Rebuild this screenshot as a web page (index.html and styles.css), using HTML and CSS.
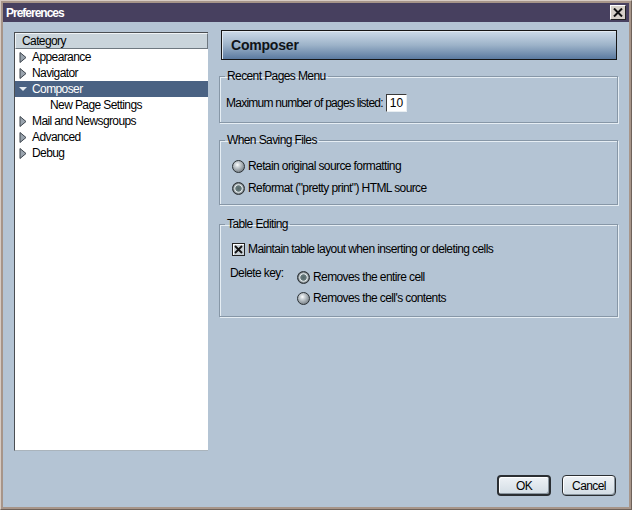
FILE: index.html
```html
<!DOCTYPE html>
<html>
<head>
<meta charset="utf-8">
<link rel="stylesheet" href="styles.css">
</head>
<body>
<div class="window">
  <div class="frame">
    <div class="titlebar">
      <span class="title">Preferences</span>
      <span class="close"><svg width="10" height="9" viewBox="0 0 10 9"><path d="M1 0.5 L9 8.5 M9 0.5 L1 8.5" stroke="#111" stroke-width="2"/></svg></span>
    </div>
    <div class="body">
      <div class="main">
        <div class="tree">
          <div class="tree-head">Category</div>
          <div class="row"><svg class="twisty" width="8" height="11" viewBox="0 0 8 11"><path d="M1 0.5 L7 5.5 L1 10.5 Z" fill="#9aa4ae" stroke="#3c444c"/></svg>Appearance</div>
          <div class="row"><svg class="twisty" width="8" height="11" viewBox="0 0 8 11"><path d="M1 0.5 L7 5.5 L1 10.5 Z" fill="#9aa4ae" stroke="#3c444c"/></svg>Navigator</div>
          <div class="row selected"><svg class="twisty" width="8" height="11" viewBox="0 0 8 11"><path d="M0 3 L8 3 L4 7 Z" fill="#e6ecf2"/></svg>Composer</div>
          <div class="row child">New Page Settings</div>
          <div class="row"><svg class="twisty" width="8" height="11" viewBox="0 0 8 11"><path d="M1 0.5 L7 5.5 L1 10.5 Z" fill="#9aa4ae" stroke="#3c444c"/></svg>Mail and Newsgroups</div>
          <div class="row"><svg class="twisty" width="8" height="11" viewBox="0 0 8 11"><path d="M1 0.5 L7 5.5 L1 10.5 Z" fill="#9aa4ae" stroke="#3c444c"/></svg>Advanced</div>
          <div class="row"><svg class="twisty" width="8" height="11" viewBox="0 0 8 11"><path d="M1 0.5 L7 5.5 L1 10.5 Z" fill="#9aa4ae" stroke="#3c444c"/></svg>Debug</div>
        </div>
        <div class="pane">
          <div class="pane-head">Composer</div>
          <fieldset class="group g1">
            <legend>Recent Pages Menu</legend>
            <div class="line">
              <span class="line-label">Maximum number of pages listed:</span>
              <span class="input">10</span>
            </div>
          </fieldset>
          <fieldset class="group g2">
            <legend>When Saving Files</legend>
            <div class="opt"><span class="radio"></span>Retain original source formatting</div>
            <div class="opt"><span class="radio on"></span>Reformat ("pretty print") HTML source</div>
          </fieldset>
          <fieldset class="group g3">
            <legend>Table Editing</legend>
            <div class="opt"><span class="check"><svg width="9" height="9" viewBox="0 0 9 9"><path d="M1 1 L8 8 M8 1 L1 8" stroke="#111" stroke-width="1.8"/></svg></span>Maintain table layout when inserting or deleting cells</div>
            <div class="delete">
              <span class="del-label">Delete key:</span>
              <div class="del-opts">
                <div class="opt"><span class="radio on"></span>Removes the entire cell</div>
                <div class="opt"><span class="radio"></span>Removes the cell's contents</div>
              </div>
            </div>
          </fieldset>
        </div>
      </div>
      <div class="buttons">
        <span class="btn default">OK</span>
        <span class="btn">Cancel</span>
      </div>
    </div>
  </div>
</div>
</body>
</html>
```
FILE: styles.css
```css
* { box-sizing: border-box; }
html, body { margin: 0; padding: 0; background: #b4c4d4; }
body {
  font-family: "Liberation Sans", Arial, sans-serif;
  font-size: 12px;
  letter-spacing: -0.6px;
  color: #000;
}
.window {
  width: 632px;
  height: 510px;
  border: 1px solid #d6cbc3;
  border-right-color: #6e625a;
  border-bottom-color: #6e625a;
}
.frame {
  width: 100%;
  height: 100%;
  border: 2px solid #a79589;
  display: flex;
  flex-direction: column;
}
.titlebar {
  height: 19px;
  background: #47405f;
  display: flex;
  align-items: center;
  justify-content: space-between;
  padding: 0 3px 0 3px;
}
.title {
  color: #fff;
  font-weight: bold;
  font-size: 12px;
  letter-spacing: -1px;
}
.close {
  width: 16px;
  height: 15px;
  background: #d6d0c8;
  border: 1px solid #fff;
  border-right-color: #222;
  border-bottom-color: #222;
  display: flex;
  align-items: center;
  justify-content: center;
}
.body {
  flex: 1;
  background: #b4c4d4;
  display: flex;
  flex-direction: column;
  padding: 8px 11px 11px 11px;
}
.main {
  display: flex;
  gap: 11px;
  align-items: flex-start;
}
.tree {
  width: 194px;
  height: 419px;
  margin-top: 2px;
  background: #fff;
  border-left: 1px solid #4a4e52;
  border-top: 1px solid #4a4e52;
  border-bottom: 1px solid #aab4bc;
}
.tree-head {
  height: 16px;
  line-height: 15px;
  background: #c9d4db;
  border: 1px solid #f0f4f6;
  border-right-color: #6e7880;
  border-bottom-color: #6e7880;
  padding-left: 6px;
}
.row {
  height: 16px;
  line-height: 16px;
  display: flex;
  align-items: center;
  padding-left: 4px;
  white-space: nowrap;
}
.twisty { margin-right: 5px; flex: none; }
.row.selected { background: #4a6283; color: #fff; }
.row.child { padding-left: 35px; }
.pane {
  flex: 1;
  display: flex;
  flex-direction: column;
}
.pane-head {
  height: 30px;
  margin: 0 1px 0 2px;
  border: 1px solid #151515;
  box-shadow: inset 1px 1px 0 #e2eaf2;
  background: linear-gradient(#cddbe9, #9db3c9 50%, #5b7aa0);
  font-weight: bold;
  font-size: 14px;
  letter-spacing: -0.2px;
  line-height: 28px;
  padding-left: 9px;
  color: #101418;
}
.group {
  margin: 9px 0 0 0;
  border: 1px solid #8797a7;
  box-shadow: inset 1px 1px 0 #e6eef4, 1px 1px 0 #e6eef4;
  padding: 0 5px;
  min-width: 0;
}
.group + .group { margin-top: 10px; }
.group.g3 { margin-top: 12px; }
.group legend {
  padding: 0 2px;
  height: 14px;
  line-height: 14px;
}
.g1 { padding-top: 11px; padding-bottom: 10px; }
.line {
  display: flex;
  align-items: center;
  height: 18px;
  padding-left: 1px;
}
.line-label { letter-spacing: -0.75px; }
.input {
  margin-left: 3px;
  width: 21px;
  height: 18px;
  background: #fff;
  border: 1px solid #3a3a3a;
  border-right-color: #e8eef2;
  border-bottom-color: #e8eef2;
  padding-left: 3px;
  line-height: 16px;
  letter-spacing: 0;
}
.g2 { padding-top: 10px; padding-bottom: 7px; }
.opt {
  display: flex;
  align-items: center;
  height: 18px;
  padding-left: 7px;
  white-space: nowrap;
}
.opt + .opt { margin-top: 4px; }
.radio {
  width: 13px;
  height: 13px;
  border-radius: 50%;
  border: 1px solid #2a3034;
  background: radial-gradient(circle at 40% 35%, #ffffff 0, #d4dade 20%, #959da3 60%, #5c646a 100%);
  margin-right: 3px;
  flex: none;
}
.radio.on {
  background: radial-gradient(circle at 50% 50%, #56686a 0, #65787a 2.8px, #dfe6e8 3.6px, #b8c0c4 4.3px, #5e666a 5.5px);
}
.check {
  width: 13px;
  height: 13px;
  border: 1px solid #222;
  background: #c8d0d6;
  box-shadow: inset 1px 1px 0 #fff;
  margin-right: 3px;
  display: flex;
  align-items: center;
  justify-content: center;
  flex: none;
}
.g3 { padding-top: 9px; padding-bottom: 9px; }
.delete {
  display: flex;
  margin-top: 8px;
}
.del-label {
  width: 72px;
  padding-left: 5px;
  line-height: 14px;
}
.del-opts { padding-top: 2px; }
.del-opts .opt { padding-left: 0; }
.del-opts .opt + .opt { margin-top: 3px; }
.buttons {
  margin-top: auto;
  display: flex;
  justify-content: flex-end;
  gap: 11px;
  padding-right: 2px;
}
.btn {
  width: 54px;
  height: 21px;
  border: 1px solid #2a2e32;
  border-radius: 4px;
  background: linear-gradient(#eef2f6, #d2dce4);
  box-shadow: inset 1px 1px 0 #fff, inset -1px -1px 0 #8a96a0;
  display: flex;
  align-items: center;
  justify-content: center;
}
.btn.default { border-width: 2px; width: 54px; }
```
